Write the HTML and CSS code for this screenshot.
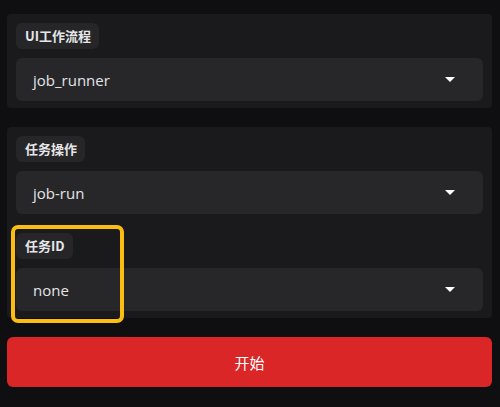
FILE: index.html
```html
<!DOCTYPE html>
<html lang="zh">
<head>
<meta charset="utf-8">
<link rel="stylesheet" href="styles.css">
</head>
<body>
  <div class="panel">
    <div class="field">
      <span class="label">UI工作流程</span>
      <div class="select"><span class="value">job_runner</span><span class="arrow"></span></div>
    </div>
  </div>
  <div class="panel">
    <div class="field">
      <span class="label">任务操作</span>
      <div class="select"><span class="value">job-run</span><span class="arrow"></span></div>
    </div>
    <div class="field highlighted">
      <span class="label">任务ID</span>
      <div class="select"><span class="value">none</span><span class="arrow"></span></div>
      <div class="highlight"></div>
    </div>
  </div>
  <button class="start">开始</button>
</body>
</html>
```
FILE: styles.css
```css
html, body {
  margin: 0;
  background: #0f0f11;
}
body {
  padding: 14px 8px 0 7px;
  font-family: "Open Sans", "Noto Sans CJK SC", sans-serif;
  color: #e8e8ea;
  display: flex;
  flex-direction: column;
  gap: 19px;
}
.panel {
  background: #1a1a1c;
  border-radius: 4px;
  padding: 9px 9px 7px 9px;
  display: flex;
  flex-direction: column;
  gap: 19px;
}
.field {
  display: flex;
  flex-direction: column;
  align-items: flex-start;
  gap: 9px;
}
.highlighted {
  position: relative;
}
.label {
  background: #262628;
  border-radius: 6px;
  padding: 0 8px 0 9px;
  height: 26px;
  line-height: 26px;
  font-family: "Noto Sans CJK SC", sans-serif;
  font-weight: 700;
  font-size: 13px;
  color: #e6e6e8;
}
.select {
  align-self: stretch;
  height: 43px;
  background: #27272a;
  border-radius: 6px;
  display: flex;
  align-items: center;
  justify-content: space-between;
  padding: 0 28px 0 17px;
}
.value {
  font-size: 15px;
  color: #e4e4e6;
}
.arrow {
  width: 0;
  height: 0;
  border-left: 5px solid transparent;
  border-right: 5px solid transparent;
  border-top: 5px solid #ffffff;
}
.highlight {
  position: absolute;
  left: -5px;
  top: -8px;
  width: 105px;
  height: 90px;
  border: 4px solid #fbbd12;
  border-radius: 7px;
  pointer-events: none;
}
.start {
  height: 50px;
  border: none;
  border-radius: 6px;
  background: #da2626;
  color: #ffffff;
  font-family: "Noto Sans CJK SC", sans-serif;
  font-size: 15px;
}
```
